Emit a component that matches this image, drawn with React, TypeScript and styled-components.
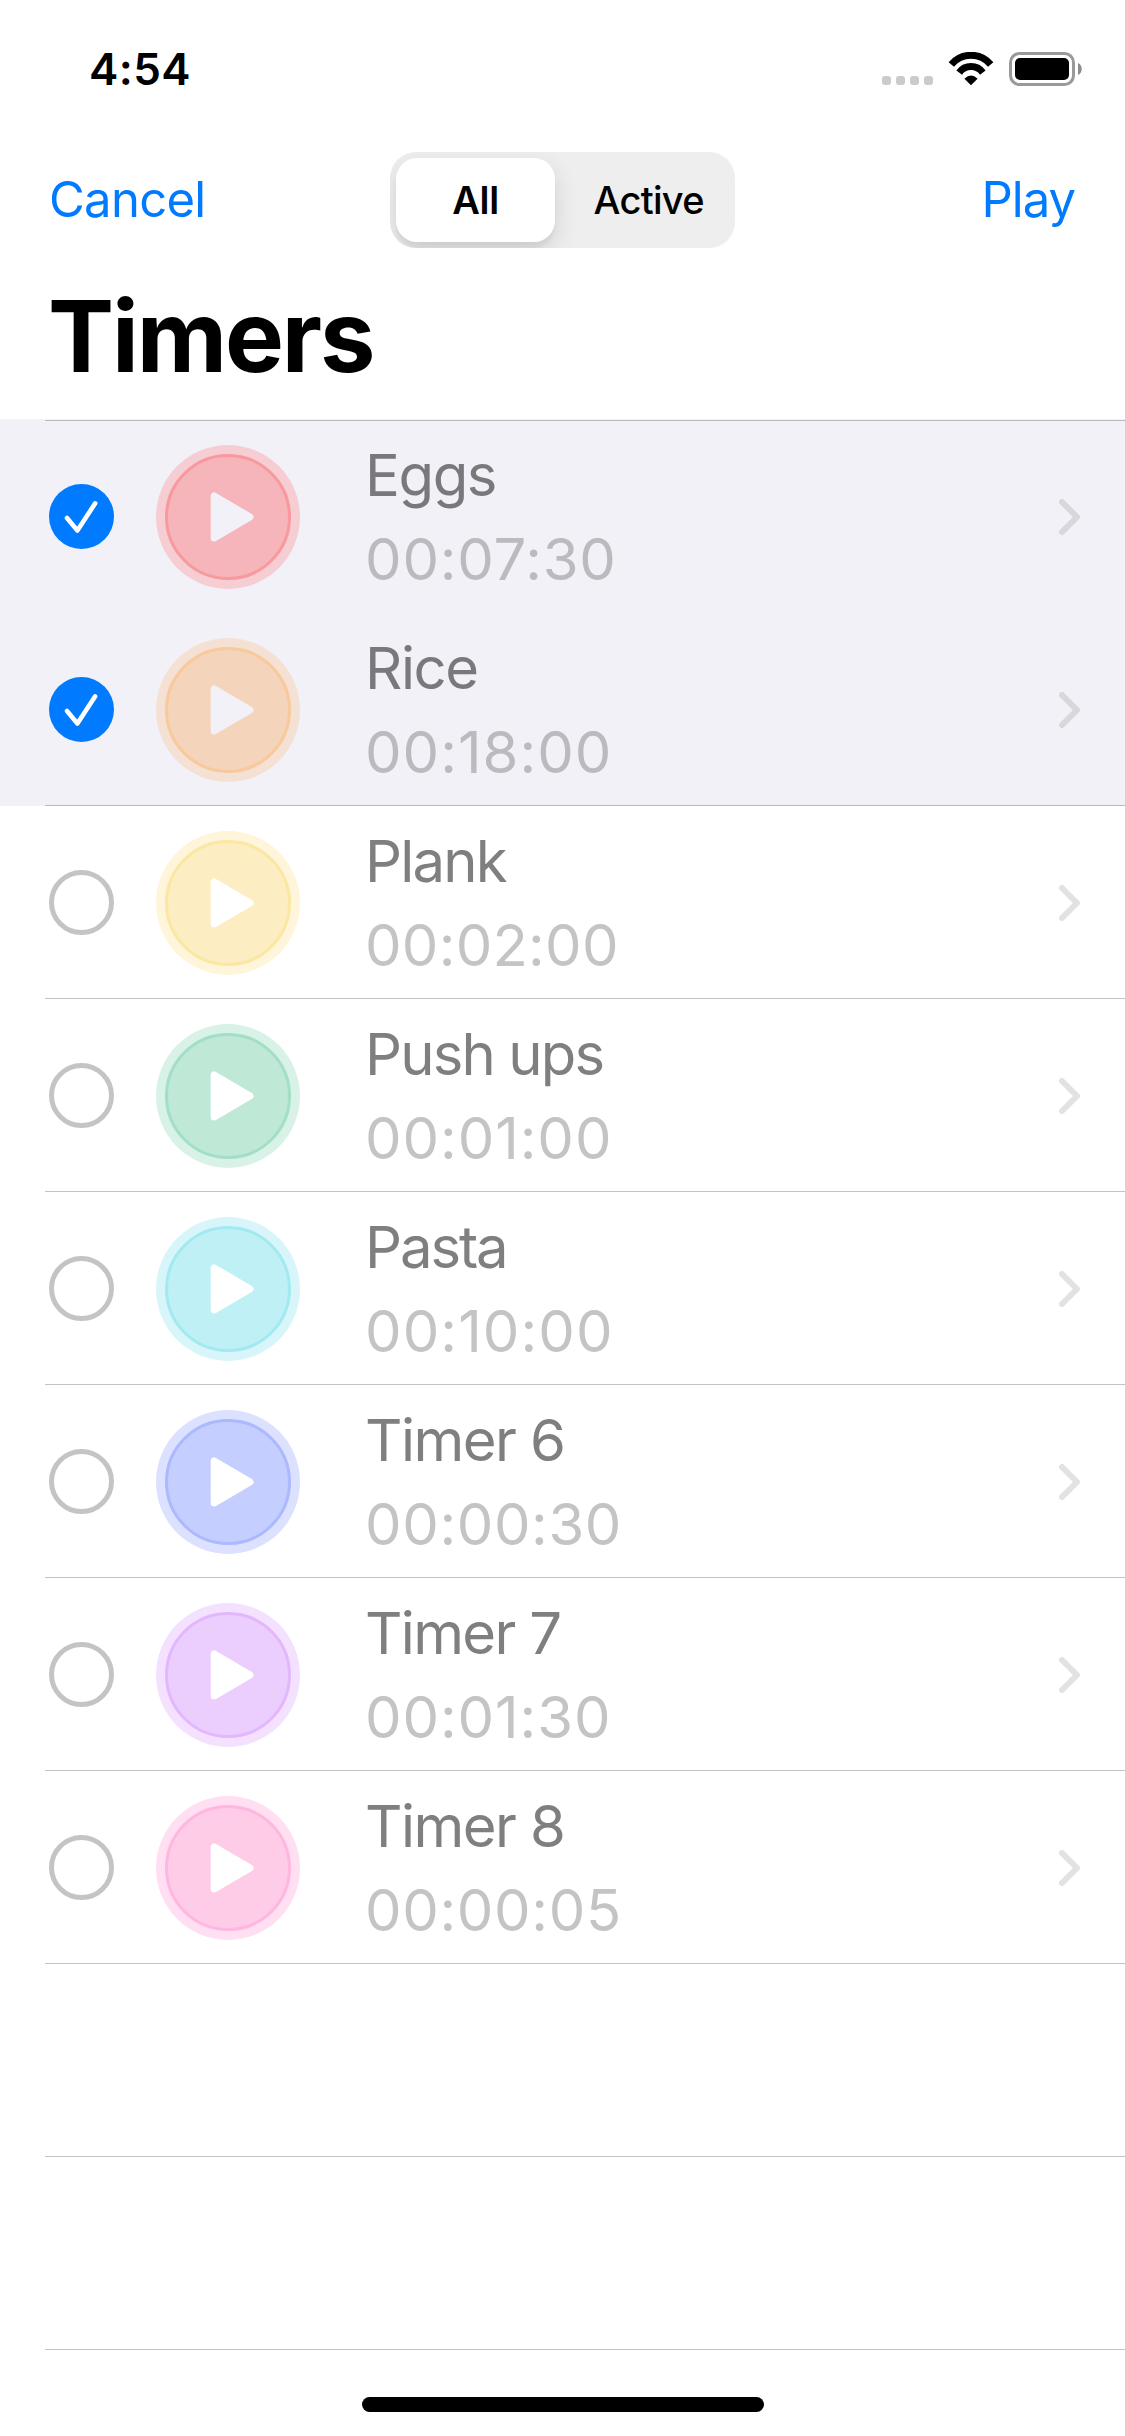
import React from 'react';
import styled, { createGlobalStyle } from 'styled-components';

const GlobalStyle = createGlobalStyle`
  *, *::before, *::after { box-sizing: border-box; }
  body {
    margin: 0;
    background: #fff;
    font-family: Inter, Roboto, "Liberation Sans", sans-serif;
  }
`;

const BLUE = '#007aff';
const SELECTED = '#f2f1f7';

const Screen = styled.div`
  width: 1125px;
  height: 2436px;
  display: flex;
  flex-direction: column;
  background: #fff;
  color: #000;
  overflow: hidden;
`;

const StatusBar = styled.div`
  height: 132px;
  flex: none;
  padding: 6px 43px 0 89px;
  display: flex;
  align-items: center;
  justify-content: space-between;
`;

const Clock = styled.span`
  font-size: 44px;
  line-height: 54px;
  font-weight: 600;
  letter-spacing: 0.4px;
`;

const StatusIcons = styled.div`
  display: flex;
  align-items: center;
  gap: 15px;
`;

const SignalDots = styled.div`
  display: flex;
  gap: 5px;
  padding-top: 23px;
`;

const SignalDot = styled.i`
  width: 9px;
  height: 9px;
  border-radius: 3px;
  background: #cbcbcb;
`;

const NavBar = styled.div`
  height: 136px;
  flex: none;
  padding: 0 50px 0 49px;
  display: grid;
  grid-template-columns: 341px 345px 1fr;
  align-items: center;
`;

const NavButton = styled.button<{ $end?: boolean; $tracking: number }>`
  margin: 0;
  padding: 0 0 1px;
  border: 0;
  background: none;
  color: ${BLUE};
  font-family: inherit;
  font-size: 49px;
  line-height: 60px;
  font-weight: 400;
  letter-spacing: ${p => p.$tracking}px;
  justify-self: ${p => (p.$end ? 'end' : 'start')};
`;

const Segmented = styled.div`
  height: 96px;
  padding: 6px 0 6px 6px;
  display: flex;
  gap: 7.5px;
  border-radius: 26px;
  background: #eeeeee;
  overflow: hidden;
`;

const Segment = styled.button<{ $active?: boolean }>`
  flex: ${p => (p.$active ? '0 0 159px' : '1 1 0')};
  margin: 0;
  padding: 0;
  border: 0;
  border-radius: 21px;
  background: ${p => (p.$active ? '#fff' : 'transparent')};
  box-shadow: ${p => (p.$active ? '0 9px 24px rgba(0,0,0,.12), 0 6px 3px rgba(0,0,0,.04)' : 'none')};
  color: #000;
  font-family: inherit;
  font-size: 38px;
  line-height: 48px;
  font-weight: ${p => (p.$active ? 600 : 500)};
  letter-spacing: ${p => (p.$active ? -0.3 : -0.7)}px;
`;

const Title = styled.h1`
  height: 151px;
  flex: none;
  margin: 0;
  padding: 8px 0 0 48px;
  font-size: 99px;
  line-height: 120px;
  font-weight: 700;
  letter-spacing: -2.1px;
`;

const List = styled.div`
  flex: none;
`;

const ListTop = styled.div`
  height: 2px;
  padding: 1px 0 0 45px;
  background: ${SELECTED};
`;

const Rule = styled.div<{ $hidden?: boolean }>`
  height: 1px;
  background: ${p => (p.$hidden ? 'transparent' : 'rgba(60,60,67,.31)')};
`;

const Row = styled.div<{ $selected?: boolean }>`
  background: ${p => (p.$selected ? SELECTED : '#fff')};
`;

const RowBody = styled.div<{ $first?: boolean }>`
  height: ${p => (p.$first ? 191 : 192)}px;
  padding: ${p => (p.$first ? 1 : 2)}px 44px 0 49px;
  display: flex;
  align-items: center;
`;

const RowRule = styled.div`
  padding-left: 45px;
`;

const Radio = styled.span<{ $checked?: boolean }>`
  width: 65px;
  height: 65px;
  flex: none;
  margin: 0 42px 1px 0;
  display: grid;
  place-items: center;
  border-radius: 50%;
  background: ${p => (p.$checked ? BLUE : 'transparent')};
  border: ${p => (p.$checked ? '0' : '5px solid #c4c4c6')};
`;

const PlayHalo = styled.button<{ $halo: string }>`
  width: 144px;
  height: 144px;
  flex: none;
  margin: 0 65px 0 0;
  padding: 9px;
  border: 0;
  border-radius: 50%;
  background: ${p => p.$halo};
`;

const PlayDisc = styled.span<{ $fill: string; $ring: string }>`
  width: 126px;
  height: 126px;
  display: block;
  border-radius: 50%;
  border: 3px solid ${p => p.$ring};
  background: ${p => p.$fill};
  svg { display: block; }
`;

const Labels = styled.div`
  flex: 1;
  display: flex;
  flex-direction: column;
  white-space: pre;
  font-size: 58px;
  line-height: 84px;
`;

const Name = styled.span<{ $tracking: number; $selected?: boolean }>`
  color: ${p => (p.$selected ? '#79797b' : '#7f7f7f')};
  letter-spacing: ${p => p.$tracking}px;
`;

const Duration = styled.span<{ $tracking: number; $selected?: boolean }>`
  color: ${p => (p.$selected ? '#bbbabf' : '#c4c4c6')};
  letter-spacing: ${p => p.$tracking}px;
`;

const Footer = styled.div`
  flex: 1;
  display: flex;
  justify-content: center;
  align-items: flex-end;
  padding-bottom: 24px;
`;

const HomeIndicator = styled.div`
  width: 402px;
  height: 15px;
  border-radius: 8px;
  background: #000;
`;

function WifiIcon() {
  return (
    <svg width="46" height="34" viewBox="0 0 46 34" fill="none" stroke="#000" strokeWidth="7">
      <path d="M3.3 12.5A25.7 25.7 0 0 1 42.7 12.5" />
      <path d="M11.2 20.6A14.6 14.6 0 0 1 34.8 20.6" />
      <path d="M16.4 26.8Q23 20.2 29.6 26.8L23 33.3Z" fill="#000" stroke="none" />
    </svg>
  );
}

function BatteryIcon() {
  return (
    <svg width="73" height="34" viewBox="0 0 73 34">
      <rect x="1.5" y="1.5" width="63" height="31" rx="9" fill="none" stroke="#9a9a9a" strokeWidth="3" />
      <rect x="6" y="6" width="54" height="22" rx="5" fill="#000" />
      <path d="M69 11C74 13.2 74 20.8 69 23Z" fill="#8c8c8c" />
    </svg>
  );
}

function CheckIcon() {
  return (
    <svg width="65" height="65" viewBox="0 0 65 65" fill="none" stroke="#fff" strokeWidth="4.6" strokeLinecap="round" strokeLinejoin="round">
      <path d="M18 34L28.4 46.5L46.2 19.3" />
    </svg>
  );
}

function PlayIcon({ color }: { color: string }) {
  return (
    <svg width="120" height="120" viewBox="12 12 120 120">
      <path d="M58.2 50.9L58.2 93.1L94 72Z" fill={color} stroke={color} strokeWidth="7" strokeLinejoin="round" />
    </svg>
  );
}

function Chevron({ color }: { color: string }) {
  return (
    <svg width="22" height="36" viewBox="0 0 22 36" fill="none" stroke={color} strokeWidth="6" strokeLinecap="round" strokeLinejoin="round">
      <path d="M3 3L18 18L3 33" />
    </svg>
  );
}

type Timer = {
  name: string;
  time: string;
  halo: string;
  fill: string;
  ring: string;
  nameTracking: number;
  timeTracking: number;
  selected?: boolean;
};

const timers: Timer[] = [
  { name: 'Eggs', time: '00:07:30', halo: '#f5cdd3', fill: '#f6b5ba', ring: '#f8999e', nameTracking: -1.4, timeTracking: 0.8, selected: true },
  { name: 'Rice', time: '00:18:00', halo: '#f4e1d3', fill: '#f4d5bb', ring: '#f7c99b', nameTracking: -1.4, timeTracking: 1.03, selected: true },
  { name: 'Plank', time: '00:02:00', halo: '#fef5db', fill: '#fdedc2', ring: '#fbe7a1', nameTracking: -1.8, timeTracking: 0.25 },
  { name: 'Push ups', time: '00:01:00', halo: '#d9f2e7', fill: '#bfe8d7', ring: '#a2dfc6', nameTracking: -1.85, timeTracking: 0.93 },
  { name: 'Pasta', time: '00:10:00', halo: '#d8f6fa', fill: '#bef0f5', ring: '#a2e9f1', nameTracking: -2.1, timeTracking: 1.08 },
  { name: 'Timer 6', time: '00:00:30', halo: '#dce1ff', fill: '#c4ceff', ring: '#abb9ff', nameTracking: -1.55, timeTracking: 0.6 },
  { name: 'Timer 7', time: '00:01:30', halo: '#f4e1ff', fill: '#eccefe', ring: '#e3b7fe', nameTracking: -1.65, timeTracking: 0.9 },
  { name: 'Timer 8', time: '00:00:05', halo: '#ffdff1', fill: '#ffcce8', ring: '#ffb6df', nameTracking: -1.55, timeTracking: 0.65 },
];

function TimerRow({ timer, first, joined }: { timer: Timer; first: boolean; joined: boolean }) {
  const { selected } = timer;
  return (
    <Row $selected={selected}>
      <RowBody $first={first}>
        <Radio $checked={selected}>{selected && <CheckIcon />}</Radio>
        <PlayHalo $halo={timer.halo}>
          <PlayDisc $fill={timer.fill} $ring={timer.ring}>
            <PlayIcon color={selected ? SELECTED : '#fff'} />
          </PlayDisc>
        </PlayHalo>
        <Labels>
          <Name $tracking={timer.nameTracking} $selected={selected}>{timer.name}</Name>
          <Duration $tracking={timer.timeTracking} $selected={selected}>{timer.time}</Duration>
        </Labels>
        <Chevron color={selected ? '#d8d7dc' : '#e2e2e3'} />
      </RowBody>
      <RowRule>
        <Rule $hidden={joined} />
      </RowRule>
    </Row>
  );
}

export default function App() {
  return (
    <Screen>
      <GlobalStyle />
      <StatusBar>
        <Clock>4:54</Clock>
        <StatusIcons>
          <SignalDots>
            <SignalDot />
            <SignalDot />
            <SignalDot />
            <SignalDot />
          </SignalDots>
          <WifiIcon />
          <BatteryIcon />
        </StatusIcons>
      </StatusBar>
      <NavBar>
        <NavButton $tracking={-0.7}>Cancel</NavButton>
        <Segmented>
          <Segment $active>All</Segment>
          <Segment>Active</Segment>
        </Segmented>
        <NavButton $end $tracking={-1}>Play</NavButton>
      </NavBar>
      <Title>Timers</Title>
      <List>
        <ListTop>
          <Rule />
        </ListTop>
        {timers.map((timer, i) => (
          <TimerRow
            key={timer.name}
            timer={timer}
            first={i === 0}
            joined={Boolean(timer.selected && timers[i + 1]?.selected)}
          />
        ))}
        {[0, 1].map(i => (
          <Row key={i}>
            <RowBody />
            <RowRule>
              <Rule />
            </RowRule>
          </Row>
        ))}
      </List>
      <Footer>
        <HomeIndicator />
      </Footer>
    </Screen>
  );
}
